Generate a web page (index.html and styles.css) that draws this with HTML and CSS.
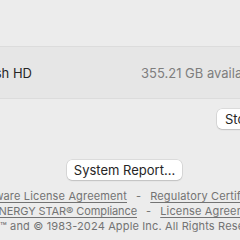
FILE: index.html
```html
<!DOCTYPE html>
<html lang="en">
<head>
<meta charset="utf-8">
<title>About This Mac</title>
<link rel="stylesheet" href="styles.css">
</head>
<body>
<main class="window">
  <section class="panel">
    <div class="row">
      <div class="name-cell"><span class="name">Macintosh HD</span></div>
      <span class="value">355.21 GB available of 494.38 GB</span>
    </div>
  </section>
  <div class="storage-line">
    <button class="btn">Storage Settings…</button>
  </div>
  <div class="report-line">
    <button class="btn report">System Report...</button>
  </div>
  <footer class="legal">
    <div class="legal-line">
      <div class="cut cut-1"><a class="link">Software License Agreement</a></div>
      <span class="sep">-</span>
      <a class="link">Regulatory Certification</a>
    </div>
    <div class="legal-line">
      <div class="cut cut-2"><a class="link tight">ENERGY STAR® Compliance</a></div>
      <span class="sep">-</span>
      <a class="link">License Agreement</a>
    </div>
    <div class="legal-line copy">™ and © 1983-2024 Apple Inc. All Rights Reserved.</div>
  </footer>
</main>
</body>
</html>
```

FILE: styles.css
```css
html, body {
  margin: 0;
  padding: 0;
}
body {
  width: 240px;
  height: 240px;
  overflow: hidden;
  background: #ececec;
  font-family: "Inter", "Noto Sans", sans-serif;
  color: #262626;
  white-space: nowrap;
}
.window {
  display: flex;
  flex-direction: column;
  padding-top: 46px;
}
.panel {
  background: #e6e6e6;
  border-top: 1px solid #dcdcdc;
  border-bottom: 1px solid #dcdcdc;
  height: 51px;
  display: flex;
  align-items: center;
}
.row {
  display: flex;
  align-items: center;
  font-size: 13px;
}
.name-cell {
  width: 32px;
  display: flex;
  justify-content: flex-end;
}
.name {
  color: #262626;
}
.value {
  margin-left: 109px;
  color: #7e7e7e;
}
.storage-line {
  display: flex;
  padding-left: 217px;
  margin-top: 10px;
}
.report-line {
  display: flex;
  padding-left: 67px;
  margin-top: 31px;
}
.btn {
  font-family: inherit;
  font-size: 13px;
  color: #262626;
  background: #ffffff;
  border: none;
  border-radius: 5px;
  height: 20px;
  padding: 0 8px;
  flex-shrink: 0;
  box-shadow: 0 0 0 0.5px rgba(0, 0, 0, 0.14), 0 1px 1.5px rgba(0, 0, 0, 0.12);
  white-space: nowrap;
}
.report {
  width: 115px;
  padding: 0;
}
.legal {
  display: flex;
  flex-direction: column;
  margin-top: 9px;
  font-size: 11px;
  letter-spacing: 0.15px;
  line-height: 15px;
  color: #737373;
}
.legal-line {
  display: flex;
}
.cut {
  display: flex;
  justify-content: flex-end;
  flex-shrink: 0;
}
.cut-1 {
  width: 127px;
}
.cut-2 {
  width: 137px;
}
.link {
  color: #737373;
  text-decoration: underline;
  text-underline-offset: 2px;
  flex-shrink: 0;
}
.tight {
  letter-spacing: -0.1px;
}
.sep {
  padding: 0 9px;
  flex-shrink: 0;
}
.copy {
  padding-left: 0;
}
```
